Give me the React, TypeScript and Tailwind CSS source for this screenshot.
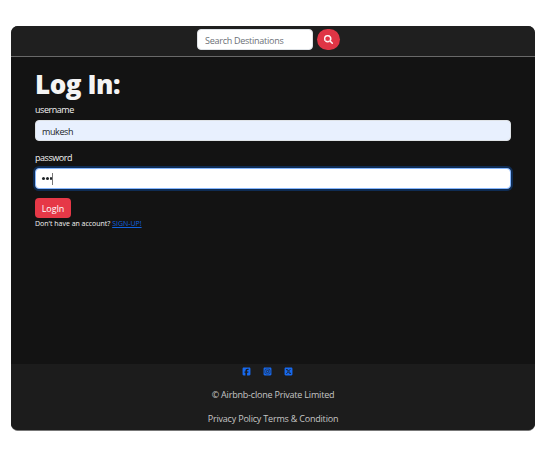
import type { ReactNode } from "react";
import {
  FaMagnifyingGlass,
  FaSquareFacebook,
  FaSquareInstagram,
  FaSquareXTwitter,
} from "react-icons/fa6";

function Header() {
  return (
    <header className="flex h-[31px] items-start justify-center border-b border-[#696969] bg-[#1f1f1f] pt-[3px] pr-[9px]">
      <input
        aria-label="Search"
        placeholder="Search Destinations"
        className="h-[21px] w-[116px] rounded-[4px] border border-[#dee2e6] bg-white px-[7px] pt-[2px] text-[9px] tracking-[-0.26px] text-[#212529] outline-none placeholder:text-[#6c7076]"
      />
      <button
        aria-label="Search destinations"
        className="ml-[4px] flex h-[21px] w-[23px] items-center justify-center rounded-full bg-[#df3545] text-white"
      >
        <FaMagnifyingGlass className="size-[9px] stroke-white stroke-[24px]" />
      </button>
    </header>
  );
}

function Label({ children }: { children: ReactNode }) {
  return <label className="block h-[14px] text-[9px] leading-[14px] tracking-[-0.45px]">{children}</label>;
}

function LoginForm() {
  return (
    <main className="h-[307px] bg-[#131313] px-6 pt-[11px] text-[#f4f4f4]">
      <h1 className="h-[35px] text-[26px] leading-[32px] font-extrabold tracking-[-0.45px]">Log In:</h1>
      <Label>username</Label>
      <div className="mt-[3px] flex h-[21px] items-center rounded-[4px] border border-[#dee2e6] bg-[#e8f0fe] px-[6px] pt-[2px] text-[9px] tracking-[-0.4px] text-[#212529]">
        mukesh
      </div>
      <div className="mt-[10px]">
        <Label>password</Label>
      </div>
      <div className="mt-[3px] flex h-[21px] items-center rounded-[4px] border border-[#86b7fe] bg-white px-[6px] shadow-[0_0_0_2px_#0f2c53]">
        <span className="flex gap-[1px]">
          <i className="size-[2.8px] rounded-full bg-[#212529]" />
          <i className="size-[2.8px] rounded-full bg-[#212529]" />
          <i className="size-[2.8px] rounded-full bg-[#212529]" />
        </span>
        <span className="h-[12px] w-px bg-[#777]" />
      </div>
      <button className="mt-[9px] block h-[20px] w-[36px] rounded-[4px] bg-[#e63847] pt-px text-[9px] leading-[20px] tracking-[-0.1px] text-white">
        LogIn
      </button>
      <p className="h-[12px] text-[7px] leading-[12px] tracking-[-0.02px] whitespace-nowrap">
        Don't have an account?{" "}
        <a href="#signup" className="text-[#1262df] underline">SIGN-UP!</a>
      </p>
    </main>
  );
}

function Footer() {
  return (
    <footer className="flex h-[66px] flex-col items-center bg-[#1c1c1c] text-[9px] tracking-[-0.2px] text-[#c6c6c6]">
      <div className="mt-[3px] flex h-[9px] gap-3 pr-[11px] text-[#1769ee]">
        <FaSquareFacebook className="size-[9px]" />
        <FaSquareInstagram className="size-[9px]" />
        <FaSquareXTwitter className="size-[9px]" />
      </div>
      <p className="mt-[12px] h-[14px] leading-[14px]">© Airbnb-clone Private Limited</p>
      <p className="mt-[10px] h-[14px] leading-[14px]">Privacy Policy Terms &amp; Condition</p>
    </footer>
  );
}

export default function App() {
  return (
    <div className="h-[457px] w-[546px] bg-white pt-[26px] pl-[11px] font-['Open_Sans','Noto_Sans',sans-serif]">
      <div className="h-[405px] w-[524px] overflow-hidden rounded-[7px] border-b border-[#777] bg-[#1c1c1c]">
        <Header />
        <LoginForm />
        <Footer />
      </div>
    </div>
  );
}
